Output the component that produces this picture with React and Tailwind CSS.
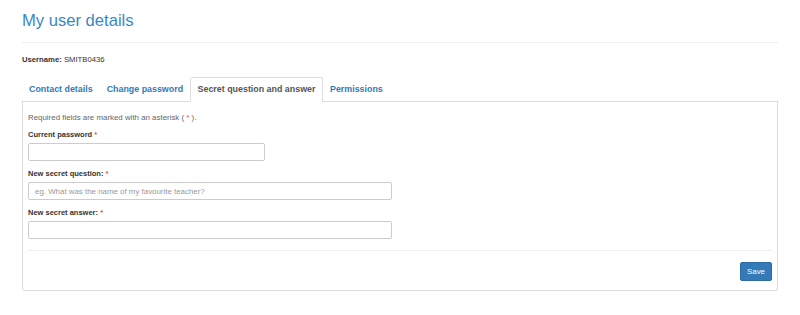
export default function App() {
  const font = { fontFamily: '"Liberation Sans", Arial, sans-serif' };
  const Star = () => <span className="text-[#d9534f]"> *</span>;
  return (
    <div className="w-[800px] h-[315px] bg-white px-[22px]" style={font}>
      <div className="pt-[11px] pb-[11px] border-b border-[#eeeeee]">
        <h1 className="text-[16.6px] leading-[20px] text-[#3a87c6] font-normal">My user details</h1>
      </div>
      <div className="mt-[11px] text-[7.7px] leading-[12px] text-[#333]">
        <span className="font-bold">Username:</span> SMITB0436
      </div>
      <div className="mt-[11px] flex border-b border-[#dddddd] h-[25px]">
        <div className="h-[24px] px-[7px] pt-px flex items-center text-[8.9px] font-bold text-[#337ab7]">Contact details</div>
        <div className="h-[24px] px-[7px] pt-px flex items-center text-[8.9px] font-bold text-[#337ab7]">Change password</div>
        <div className="h-[25px] px-[6.5px] flex items-center text-[8.9px] font-bold text-[#555] bg-white border border-[#dddddd] border-b-white rounded-t-[2px]">Secret question and answer</div>
        <div className="h-[24px] px-[7px] pt-px flex items-center text-[8.9px] font-bold text-[#337ab7]">Permissions</div>
      </div>
      <div className="border-x border-b border-[#dddddd] rounded-b-[3px] px-[5px] pt-[10px] pb-[9px]">
        <p className="text-[7.9px] leading-[12px] text-[#666]">
          Required fields are marked with an asterisk (<span className="text-[#d9534f]"> * </span>).
        </p>
        <label className="block mt-[5px] text-[7.5px] leading-[12px] font-bold text-[#333]">Current password<Star /></label>
        <input className="block mt-[2px] w-[237px] h-[18px] border border-[#cccccc] rounded-[2px] outline-none" />
        <label className="block mt-[7px] text-[7.5px] leading-[12px] font-bold text-[#333]">New secret question:<Star /></label>
        <input
          className="block mt-[2px] w-[364px] h-[18px] border border-[#cccccc] rounded-[2px] px-[6px] text-[7.9px] placeholder:text-[#999] outline-none"
          placeholder="eg. What was the name of my favourite teacher?"
          style={font}
        />
        <label className="block mt-[7px] text-[7.5px] leading-[12px] font-bold text-[#333]">New secret answer:<Star /></label>
        <input className="block mt-[2px] w-[364px] h-[18px] border border-[#cccccc] rounded-[2px] outline-none" />
        <div className="mt-[11px] border-t border-[#eeeeee] pt-[11px] flex justify-end">
          <button className="w-[32px] h-[19px] bg-[#337ab7] border border-[#2e6da4] rounded-[2px] text-white text-[7.9px] leading-none" style={font}>Save</button>
        </div>
      </div>
    </div>
  );
}
